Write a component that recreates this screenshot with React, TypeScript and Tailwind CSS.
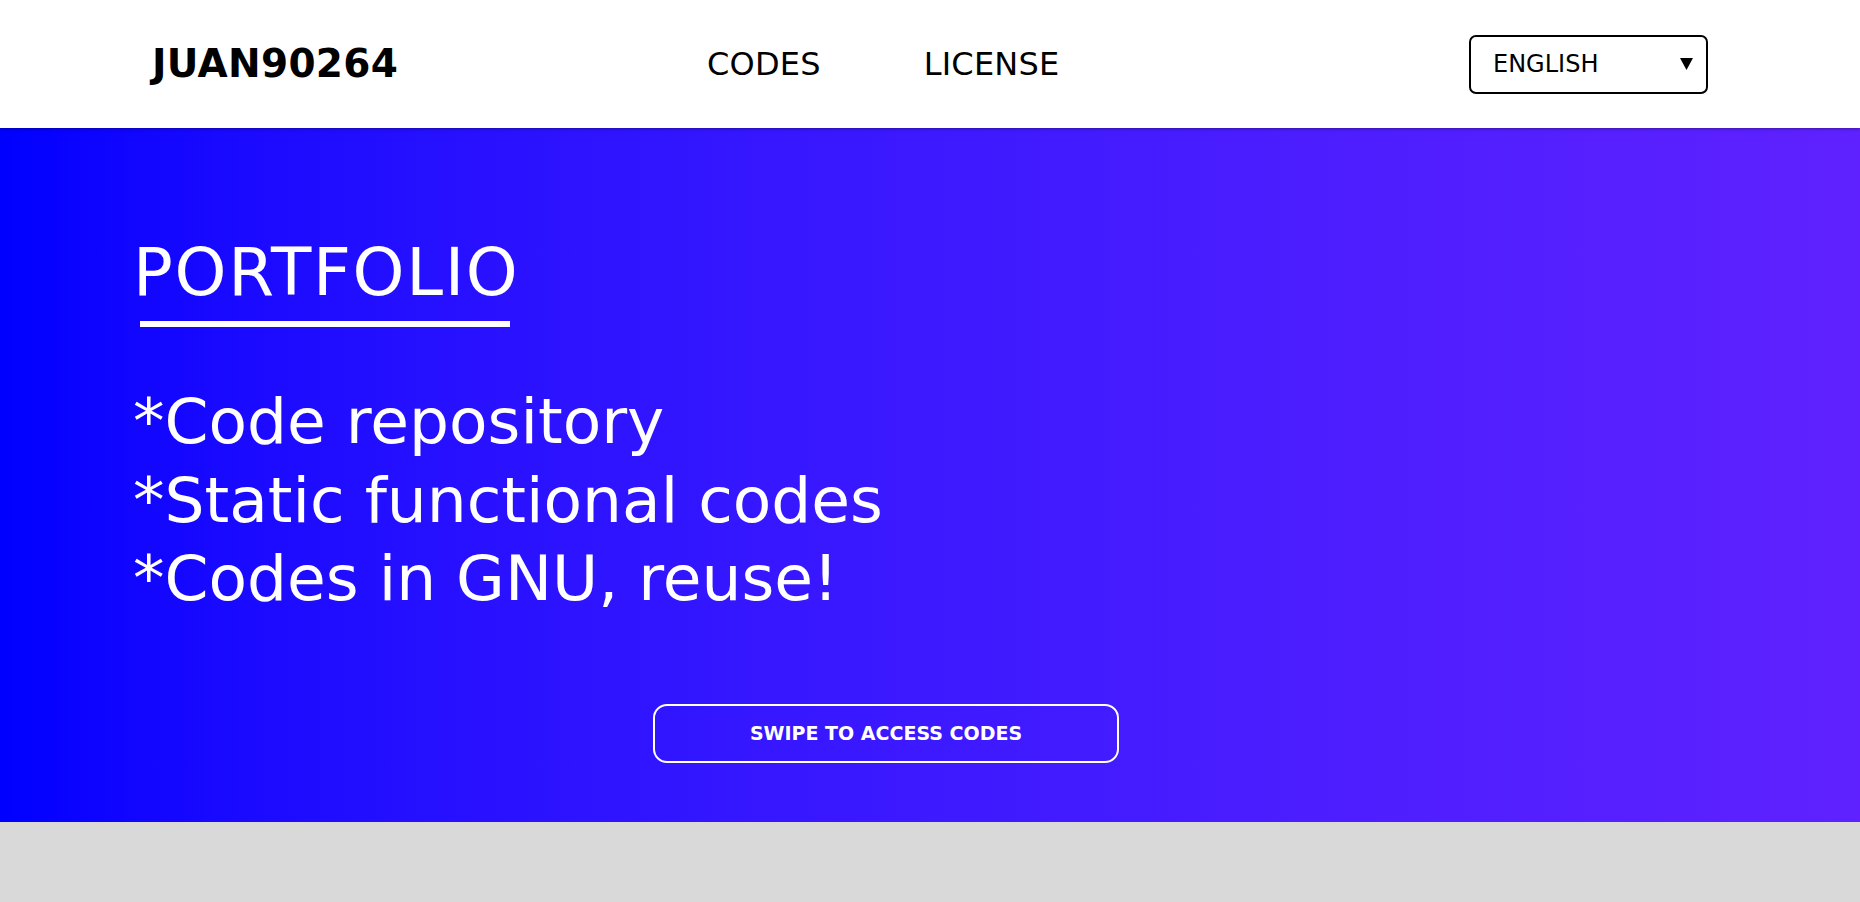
import React from "react";

const font = { fontFamily: '"DejaVu Sans", "Noto Sans", sans-serif' };

export default function App() {
  return (
    <div className="min-h-screen bg-[#d9d9d9]" style={font}>
      <header className="relative z-10 flex h-[128px] items-center bg-white pl-[152px] pr-[152px] shadow-[0_1px_3px_rgba(0,0,0,0.35)]">
        <div className="w-[555px] shrink-0">
          <span className="text-[39px] font-bold leading-none tracking-[0.3px] text-black">JUAN90264</span>
        </div>
        <nav className="flex items-center gap-[103px] text-[32px] leading-none tracking-[0.2px] text-black">
          <a className="cursor-pointer">CODES</a>
          <a className="cursor-pointer">LICENSE</a>
        </nav>
        <div className="ml-auto flex h-[59px] w-[239px] items-center rounded-[7px] border-2 border-black pl-[22px] pr-[13px]">
          <span className="text-[24px] leading-none text-black">ENGLISH</span>
          <svg className="ml-auto" width="13" height="12" viewBox="0 0 13 12">
            <polygon points="0,0 13,0 6.5,12" fill="#000" />
          </svg>
        </div>
      </header>

      <section className="flex h-[694px] flex-col bg-linear-to-r from-[#0000ff] to-[#5f21ff] pl-[133px] pt-[112px] text-white">
        <h1 className="text-[66px] font-normal leading-none tracking-[1.7px]">PORTFOLIO</h1>
        <div className="ml-[7px] mt-[15px] h-[6px] w-[370px] bg-white" />
        <div className="mt-[56px] text-[63px] leading-[78.5px]">
          <p>*Code repository</p>
          <p>*Static functional codes</p>
          <p>*Codes in GNU, reuse!</p>
        </div>
        <button className="ml-[520px] mt-[85px] flex h-[59px] w-[466px] items-center justify-center rounded-[14px] border-2 border-white text-[19px] font-bold leading-none text-white">
          SWIPE TO ACCESS CODES
        </button>
      </section>

      <div className="h-[80px] bg-[#d9d9d9]" />
    </div>
  );
}
